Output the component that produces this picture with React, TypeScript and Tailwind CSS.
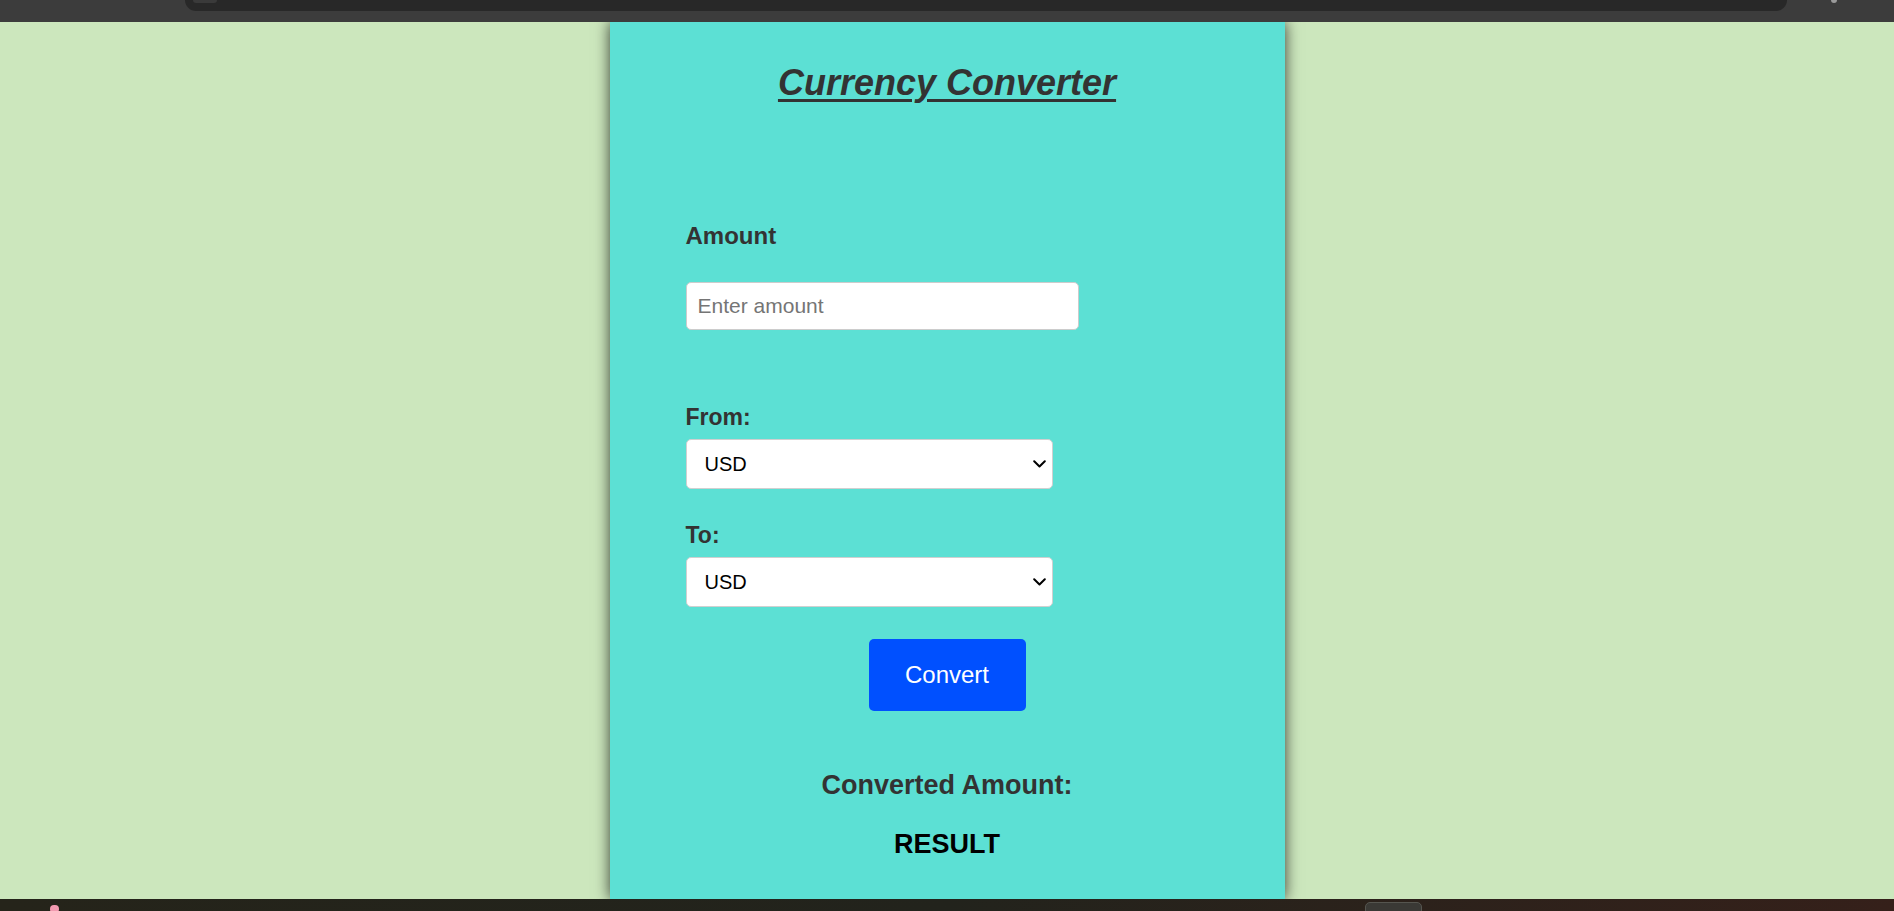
import React from "react";

function Chevron() {
  return (
    <svg
      className="pointer-events-none absolute right-[7px] top-1/2 -translate-y-1/2"
      width="13"
      height="8"
      viewBox="0 0 13 8"
      fill="none"
    >
      <path d="M1.2 1.2 L6.5 6.5 L11.8 1.2" stroke="#000" strokeWidth="2" strokeLinecap="round" strokeLinejoin="round" />
    </svg>
  );
}

function CurrencySelect() {
  return (
    <div className="relative mt-[9px] h-[50px] w-[367px]">
      <select
        defaultValue="USD"
        className="h-full w-full appearance-none rounded-[5px] border border-[#d0d0d0] bg-white pl-[18px] text-[20px] text-black outline-none"
      >
        <option value="USD">USD</option>
        <option value="EUR">EUR</option>
        <option value="GBP">GBP</option>
        <option value="INR">INR</option>
        <option value="JPY">JPY</option>
      </select>
      <Chevron />
    </div>
  );
}

export default function App() {
  return (
    <div className="flex h-screen flex-col overflow-hidden font-['Liberation_Sans',Arial,sans-serif]">
      {/* browser chrome */}
      <div className="flex h-[22px] shrink-0 items-start bg-[#3c3c3c]">
        <div className="ml-[185px] flex h-[11px] w-[1602px] items-start rounded-b-[14px] bg-[#282828]">
          <div className="ml-[8px] h-[3px] w-[24px] rounded-b-full bg-[#3a3a3a]" />
        </div>
        <div className="ml-[44px] h-[3px] w-[6px] rounded-b-full bg-[#9a9a9a]" />
      </div>

      {/* page */}
      <div className="flex-1 overflow-hidden bg-[#cce7bd]">
        <div className="mx-auto flex h-full w-[675px] flex-col bg-[#5ce0d4] pt-[41px] shadow-[0_0_14px_rgba(0,0,0,0.75)]">
          <h1 className="text-center text-[36px] font-bold italic leading-[40px] text-[#333333] underline decoration-[3px] underline-offset-[4px]">
            Currency Converter
          </h1>

          <div className="flex flex-col items-start pl-[76px] text-[#333333]">
            <label className="mt-[119px] text-[24px] font-bold leading-[28px]">Amount</label>
            <input
              type="text"
              placeholder="Enter amount"
              className="mt-[32px] h-[48px] w-[393px] rounded-[5px] border border-[#cccccc] bg-white pl-[11px] text-[21px] text-black outline-none placeholder:text-[#757575]"
            />

            <label className="mt-[74px] text-[23px] font-bold leading-[26px]">From:</label>
            <CurrencySelect />

            <label className="mt-[33px] text-[23px] font-bold leading-[26px]">To:</label>
            <CurrencySelect />
          </div>

          <button className="mt-[32px] h-[72px] w-[157px] self-center rounded-[5px] bg-[#0050ff] text-[24px] text-white">
            Convert
          </button>

          <h2 className="mt-[59px] text-center text-[27px] font-bold leading-[31px] text-[#333333]">
            Converted Amount:
          </h2>
          <p className="mt-[28px] text-center text-[27px] font-bold leading-[31px] text-black">RESULT</p>
        </div>
      </div>

      {/* taskbar */}
      <div className="flex h-[12px] shrink-0 flex-col">
        <div className="h-[2px] bg-[#4b4a43]" />
        <div className="flex flex-1 items-start bg-gradient-to-r from-[#25241a] via-[#22231c] to-[#35201a]">
          <div className="ml-[50px] mt-[6px] h-[8px] w-[9px] rounded-full bg-[#f29ab0]" />
          <div className="ml-[1306px] mt-[3px] h-[10px] w-[57px] rounded-t-[5px] border border-[#55554f] bg-[#3a3935]" />
        </div>
      </div>
    </div>
  );
}
